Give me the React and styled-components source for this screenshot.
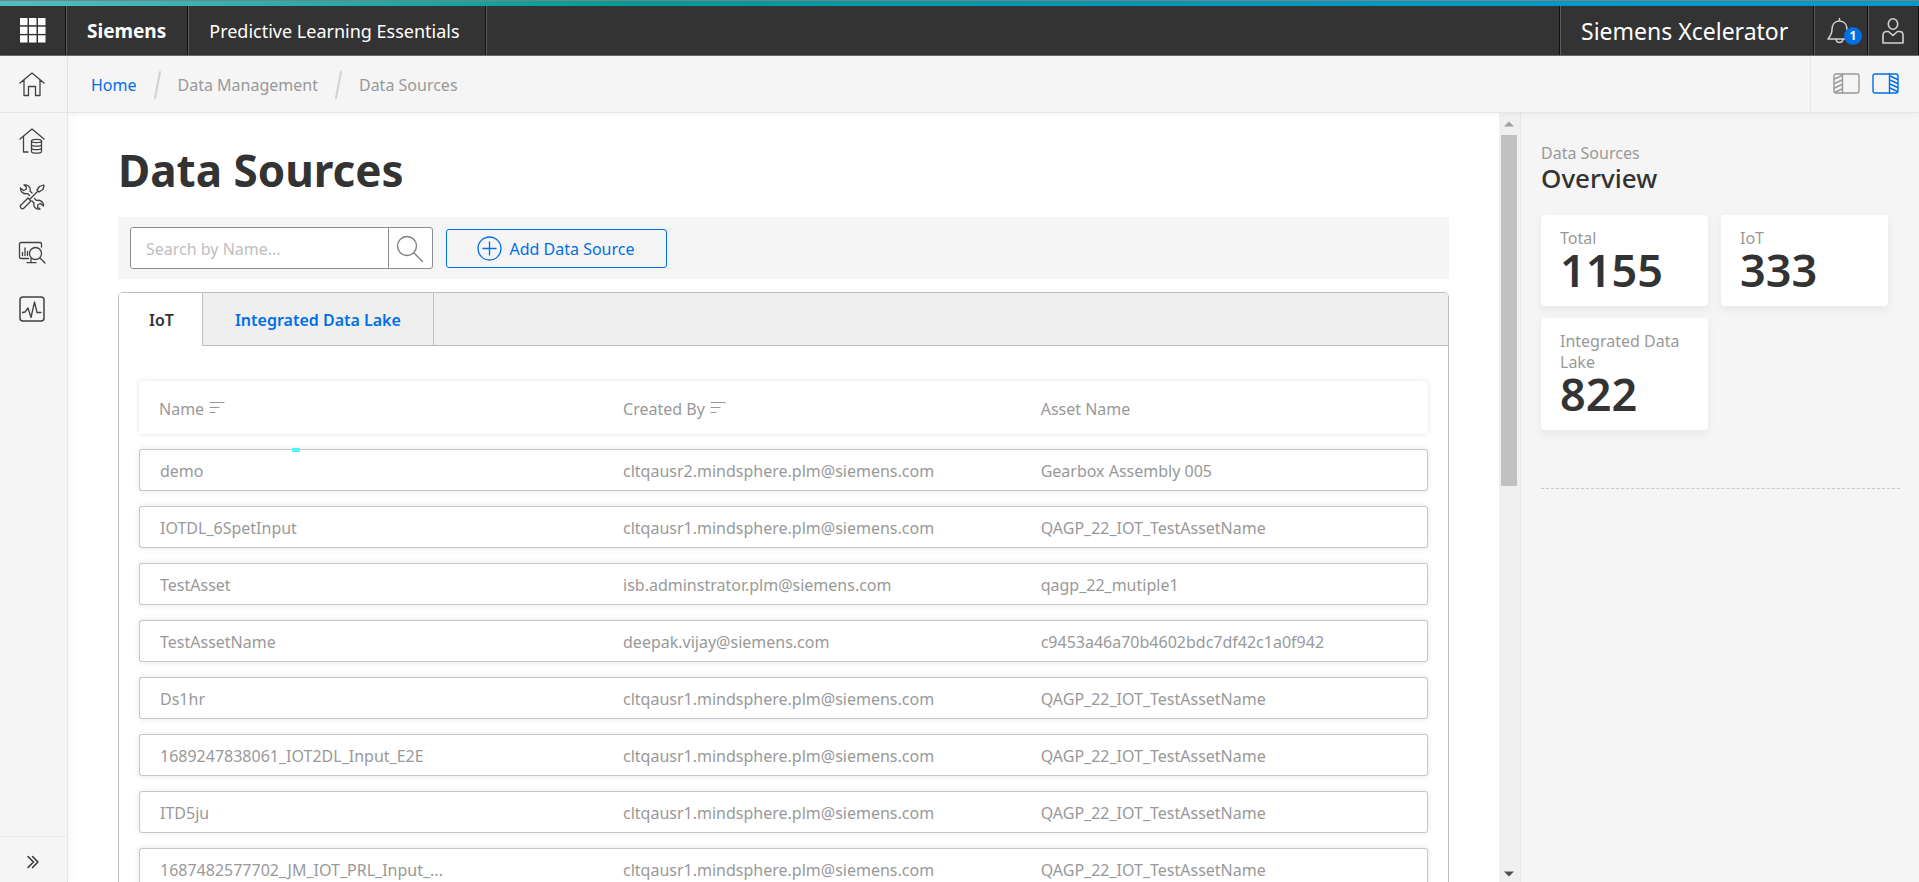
import { useState } from "react";
import styled, { createGlobalStyle } from "styled-components";

const colors = {
    dark: "#333333",
    text: "#333333",
    grey: "#999999",
    light: "#f5f5f5",
    border: "#e6e6e6",
    frame: "#bebebe",
    primary: "#006fe6",
    white: "#ffffff",
};

const GlobalStyle = createGlobalStyle`
    *, *::before, *::after {
        box-sizing: border-box;
    }
    body {
        margin: 0;
        background: ${colors.white};
        color: ${colors.text};
        font-family: "Noto Sans", "Open Sans", sans-serif;
        font-size: 16px;
        line-height: 22px;
    }
    button, input {
        font: inherit;
    }
`;

const Page = styled.div`
    display: flex;
    flex-direction: column;
    height: 100vh;
    overflow: hidden;
`;

/* Header */
const Stripe = styled.div`
    flex: none;
    height: 6px;
    border-top: 1px solid #7c8083;
    background: linear-gradient(90deg, #50bebe 0%, #009b96 33%, #0099aa 50%, #0099cb 85%);
`;

const TopBar = styled.header`
    display: flex;
    flex: none;
    height: 50px;
    border-bottom: 1px solid #6b6b6b;
    background: ${colors.dark};
    color: ${colors.white};
`;

const TopCell = styled.div`
    display: flex;
    align-items: center;
    min-width: ${({ $min }) => $min || 0}px;
    padding: 0 21px;
    border-right: 1px solid #111111;
    box-shadow: 1px 0 0 #5c5c5c;
    font-size: ${({ $size }) => $size || 18}px;
    font-weight: ${({ $bold }) => ($bold ? 700 : 400)};
    white-space: nowrap;
`;

const TopSpace = styled.div`
    flex: 1;
    border-right: 1px solid #111111;
    box-shadow: 1px 0 0 #5c5c5c;
`;

const TopButton = styled.button`
    position: relative;
    display: flex;
    align-items: center;
    justify-content: center;
    width: ${({ $width }) => $width}px;
    padding: 0;
    border: 0;
    border-right: 1px solid #111111;
    box-shadow: 1px 0 0 #5c5c5c;
    background: none;
    color: ${({ $bright }) => ($bright ? colors.white : "#d2d2d2")};
    cursor: pointer;
`;

const Badge = styled.span`
    position: absolute;
    right: 5px;
    top: 21px;
    width: 18px;
    height: 18px;
    border-radius: 50%;
    background: ${colors.primary};
    color: ${colors.white};
    font-size: 12px;
    font-weight: 700;
    line-height: 18px;
    text-align: center;
`;

/* Body and side navigation */
const Body = styled.div`
    display: flex;
    flex: 1;
    min-height: 0;
`;

const SideNav = styled.nav`
    display: flex;
    flex: none;
    flex-direction: column;
    width: 68px;
    border-right: 1px solid ${colors.border};
    background: ${colors.light};
    box-shadow: 0 0 10px rgba(0, 0, 0, 0.06);
    z-index: 1;
`;

const NavLink = styled.a`
    display: flex;
    align-items: center;
    justify-content: center;
    height: 56px;
    padding-right: 3px;
    color: #414141;
`;

const NavHome = styled(NavLink)`
    height: 57px;
    border-bottom: 1px solid ${colors.border};
`;

const NavToggle = styled.button`
    display: flex;
    align-items: center;
    justify-content: center;
    height: 46px;
    margin-top: auto;
    padding: 4px 2px 0 0;
    border: 0;
    border-top: 1px solid #ebebeb;
    background: none;
    color: ${colors.dark};
    cursor: pointer;
`;

const Content = styled.div`
    display: flex;
    flex: 1;
    flex-direction: column;
    min-width: 0;
`;

/* Breadcrumb */
const CrumbBar = styled.div`
    display: flex;
    flex: none;
    height: 57px;
    border-bottom: 1px solid ${colors.border};
    background: ${colors.light};
    box-shadow: 0 1px 5px rgba(0, 0, 0, 0.05);
    z-index: 1;
`;

const Crumbs = styled.nav`
    display: flex;
    flex: 1;
    align-items: center;
    gap: 17px;
    padding: 2px 23px 0;
    color: ${colors.grey};
`;

const CrumbLink = styled.a`
    color: ${({ $active }) => ($active ? colors.primary : colors.grey)};
    text-decoration: none;
`;

const ViewSwitch = styled.div`
    display: flex;
    align-items: center;
    gap: 12px;
    width: 109px;
    padding: 0 0 2px 22px;
    border-left: 1px solid ${colors.border};
`;

const ViewButton = styled.button`
    display: flex;
    padding: 0;
    border: 0;
    background: none;
    color: ${({ $active }) => ($active ? colors.primary : colors.grey)};
    cursor: pointer;
`;

const Columns = styled.div`
    display: flex;
    flex: 1;
    min-height: 0;
`;

const Main = styled.main`
    flex: 1;
    min-width: 0;
    padding: 25px 50px;
    overflow: hidden;
`;

const Title = styled.h1`
    margin: 0 0 15px;
    font-size: 44px;
    font-weight: 700;
    line-height: 64px;
`;

/* Search and actions */
const Toolbar = styled.div`
    display: flex;
    align-items: center;
    gap: 13px;
    height: 62px;
    margin-bottom: 13px;
    padding: 0 12px;
    background: ${colors.light};
`;

const SearchBox = styled.form`
    display: flex;
    width: 303px;
    height: 42px;
    border: 1px solid #8c8c8c;
    border-radius: 3px;
    background: ${colors.white};
`;

const SearchInput = styled.input`
    flex: 1;
    min-width: 0;
    padding: 2px 15px 0;
    border: 0;
    border-radius: 3px;
    outline: none;
    color: ${colors.text};
    &::placeholder {
        color: #bebebe;
    }
`;

const SearchButton = styled.button`
    display: flex;
    align-items: center;
    justify-content: center;
    width: 44px;
    padding: 2px 2px 0 0;
    border: 0;
    border-left: 1px solid #8c8c8c;
    background: none;
    color: #7d7d7d;
    cursor: pointer;
`;

const AddButton = styled.button`
    display: flex;
    align-items: center;
    justify-content: center;
    gap: 8px;
    width: 221px;
    height: 39px;
    padding: 0 2px 0 0;
    border: 1px solid ${colors.primary};
    border-radius: 3px;
    background: ${colors.light};
    color: ${colors.primary};
    cursor: pointer;
`;

const AddLabel = styled.span`
    padding-top: 2px;
`;

/* Tabs */
const TabFrame = styled.section`
    border: 1px solid ${colors.frame};
    border-radius: 5px;
`;

const TabList = styled.div`
    display: flex;
    height: 53px;
    border-radius: 4px 4px 0 0;
    background: #efefef;
    box-shadow: inset 0 -1px 0 ${colors.frame};
`;

const Tab = styled.button`
    padding: 0 ${({ $first }) => ($first ? "28px 0 30px" : "32px")};
    border: 0;
    border-right: 1px solid ${colors.frame};
    border-top-left-radius: ${({ $first }) => ($first ? 4 : 0)}px;
    background: ${({ $active }) => ($active ? colors.white : "none")};
    color: ${({ $active }) => ($active ? colors.text : colors.primary)};
    font-weight: 600;
    cursor: pointer;
`;

const TabPanel = styled.div`
    padding: 20px;
    min-height: 600px;
`;

const Table = styled.table`
    width: 100%;
    border-collapse: separate;
    border-spacing: 0 15px;
    table-layout: fixed;
    color: ${colors.grey};
    text-align: left;
`;

const HeadRow = styled.tr`
    height: 53px;
    border-radius: 4px;
    box-shadow: 0 0 5px rgba(0, 0, 0, 0.12);
`;

const HeadCell = styled.th`
    width: ${({ $width }) => $width};
    padding: 2px 20px 0;
    font-weight: 400;
`;

const SortButton = styled.button`
    display: flex;
    align-items: center;
    gap: 5px;
    padding: 0;
    border: 0;
    background: none;
    color: inherit;
    cursor: pointer;
    svg {
        margin-bottom: 4px;
    }
`;

const Row = styled.tr`
    height: 42px;
    border-radius: 3px;
    box-shadow: 0 0 6px rgba(0, 0, 0, 0.1);
`;

const Cell = styled.td`
    padding: 2px 20px 0;
    border: solid #c8c8c8;
    border-width: 1px 0;
    overflow: hidden;
    text-overflow: ellipsis;
    white-space: nowrap;
    &:first-child {
        border-left-width: 1px;
        border-radius: 3px 0 0 3px;
    }
    &:last-child {
        border-right-width: 1px;
        border-radius: 0 3px 3px 0;
    }
`;

const NameCell = styled(Cell)`
    position: relative;
    overflow: visible;
`;

const Marker = styled.span`
    position: absolute;
    top: -2px;
    left: 152px;
    width: 8px;
    height: 4px;
    background: #50f5f5;
`;

/* Scroll track */
const Track = styled.div`
    display: flex;
    flex: none;
    flex-direction: column;
    width: 22px;
    padding: 0 3px 0 2px;
    border-right: 1px solid ${colors.border};
    background: #f0f0f0;
`;

const TrackButton = styled.button`
    display: flex;
    align-items: center;
    justify-content: center;
    height: ${({ $dim }) => ($dim ? 22 : 16)}px;
    padding: 0;
    border: 0;
    background: none;
    color: ${({ $dim }) => ($dim ? "#a0a0a0" : "#505050")};
`;

const TrackBody = styled.div`
    flex: 1;
`;

const Thumb = styled.div`
    height: 48%;
    background: #c1c1c1;
`;

/* Overview panel */
const Panel = styled.aside`
    flex: none;
    width: 398px;
    padding: 29px 19px 0 20px;
    background: ${colors.light};
`;

const PanelLabel = styled.p`
    margin: 0;
    color: ${colors.grey};
`;

const PanelTitle = styled.h2`
    margin: 0 0 22px;
    font-size: 26px;
    font-weight: 500;
    line-height: 29px;
`;

const Cards = styled.div`
    display: grid;
    grid-template-columns: 167px 167px;
    gap: 12px 13px;
    align-items: start;
    padding-bottom: 58px;
    border-bottom: 1px dashed #c8c8c8;
`;

const Card = styled.div`
    padding: 13px 19px 15px;
    border-radius: 4px;
    background: ${colors.white};
    box-shadow: 0 4px 10px rgba(0, 0, 0, 0.06);
`;

const CardLabel = styled.p`
    margin: 0;
    color: ${colors.grey};
    line-height: 21px;
`;

const CardValue = styled.p`
    margin: 0;
    font-size: 45px;
    font-weight: 600;
    line-height: 42px;
`;

const rows = [
    ["demo", "cltqausr2.mindsphere.plm@siemens.com", "Gearbox Assembly 005"],
    ["IOTDL_6SpetInput", "cltqausr1.mindsphere.plm@siemens.com", "QAGP_22_IOT_TestAssetName"],
    ["TestAsset", "isb.adminstrator.plm@siemens.com", "qagp_22_mutiple1"],
    ["TestAssetName", "deepak.vijay@siemens.com", "c9453a46a70b4602bdc7df42c1a0f942"],
    ["Ds1hr", "cltqausr1.mindsphere.plm@siemens.com", "QAGP_22_IOT_TestAssetName"],
    ["1689247838061_IOT2DL_Input_E2E", "cltqausr1.mindsphere.plm@siemens.com", "QAGP_22_IOT_TestAssetName"],
    ["ITD5ju", "cltqausr1.mindsphere.plm@siemens.com", "QAGP_22_IOT_TestAssetName"],
    ["1687482577702_JM_IOT_PRL_Input_...", "cltqausr1.mindsphere.plm@siemens.com", "QAGP_22_IOT_TestAssetName"],
];

const stats = [
    { label: "Total", value: 1155 },
    { label: "IoT", value: 333 },
    { label: "Integrated Data Lake", value: 822 },
];

//Base icon with thin strokes
function Icon({ w = 26, h = 26, children, ...props }) {
    return (
        <svg width={w} height={h} viewBox={`0 0 ${w} ${h}`} fill="none" stroke="currentColor" strokeWidth="1.3" strokeLinecap="round" strokeLinejoin="round" aria-hidden="true" {...props}>
            {children}
        </svg>
    );
}

function GridIcon() {
    return (
        <Icon w={26} h={25} fill="currentColor" stroke="none">
            {[0, 9, 18].map((x) => [0, 8.7, 17.3].map((y) => <rect key={`${x}-${y}`} x={x} y={y} width="7.5" height="7.2" />))}
        </Icon>
    );
}

function SortIcon() {
    return (
        <Icon w={16} h={14}>
            <path d="M0.5 2.5h15M0.5 7.5h10M0.5 12.5h6" strokeLinecap="butt" strokeWidth="1" />
        </Icon>
    );
}

function Slash() {
    return (
        <Icon w={7} h={28} stroke="#d2d2d2" strokeWidth="2">
            <path d="M6 1L1 27" />
        </Icon>
    );
}

function App() {
    const [tab, setTab] = useState("iot");
    const [search, setSearch] = useState("");

    return (
        <>
            <GlobalStyle />
            <Page>
                <Stripe />
                <TopBar>
                    <TopButton $width={66} $bright aria-label="Applications">
                        <GridIcon />
                    </TopButton>
                    <TopCell $size={19} $min={121} $bold>Siemens</TopCell>
                    <TopCell $size={18} $min={298}>Predictive Learning Essentials</TopCell>
                    <TopSpace />
                    <TopCell $size={23} $min={254}>Siemens Xcelerator</TopCell>
                    <TopButton $width={54} aria-label="Notifications">
                        <Icon w={28} h={28} strokeWidth="1.5">
                            <path d="M12.5 4V1.5M12.5 4c-4.8 0-7.500 3.500-7.500 8.500 0 4-1.500 6.500-4 9.500h23c-2.500-3-4-5.500-4-9.500 0-5-2.700-8.500-7.500-8.500zM9 22.500c.3 2 1.700 3 3.500 3s3.200-1 3.500-3" />
                        </Icon>
                        <Badge>1</Badge>
                    </TopButton>
                    <TopButton $width={51} aria-label="Account">
                        <Icon w={22} h={26} strokeWidth="1.6">
                            <ellipse cx="11" cy="6" rx="4.700" ry="5.200" />
                            <path d="M6.500 13.500H4.500C2.500 13.500 1 15 1 17v8h20v-8c0-2-1.500-3.500-3.500-3.500h-2L11 17.500z" />
                        </Icon>
                    </TopButton>
                </TopBar>
                <Body>
                    <SideNav aria-label="Main">
                        <NavHome href="#home" aria-label="Home">
                            <Icon>
                                <path d="M1 12L13 2l12 10M5 9v15.500h4.500v-9h7v9H21V9" />
                            </Icon>
                        </NavHome>
                        <NavLink href="#data" aria-label="Data Management">
                            <Icon>
                                <path d="M1 11L13 1l12 10M4.500 8.500v15.500H9" />
                                <ellipse cx="17.500" cy="13" rx="5" ry="1.600" />
                                <path d="M12.500 13v10.500c0 2.200 10 2.200 10 0V13M12.500 16.500c0 2.200 10 2.200 10 0M12.500 20c0 2.200 10 2.200 10 0" />
                            </Icon>
                        </NavLink>
                        <NavLink href="#tools" aria-label="Tools">
                            <Icon>
                                <path d="M2 21l7-7 3 3-7 7c-1 1-2 1-3 0s-1-2 0-3z" />
                                <path d="M10.500 15.500l8.500-8.500M18 6l2.500-3.500 4-1.500.5.5-1 4L20 8z" />
                                <path d="M10.500 11.500l-2-2C5 10.500 1 8 1.500 4l3 2.500L7 5.500 7.500 3 5 1c4-.8 7 2 6 6l2 2" />
                                <path d="M15.500 14.500l2 2c3.500-1 7.500 1.500 7 5.500l-3-2.500-2.500 1-.5 2.500 2.500 2c-4 .8-7-2-6-6l-2-2" />
                            </Icon>
                        </NavLink>
                        <NavLink href="#analytics" aria-label="Analytics">
                            <Icon w={28} h={26}>
                                <path d="M10.500 18.500H3c-.8 0-1.500-.7-1.500-1.500V4c0-.8.7-1.500 1.500-1.500h19c.8 0 1.500.7 1.500 1.500v3M13 18.500v4M9 22.700h9M4.500 12.500v3M7 8v7.500M9.500 11.500v4" />
                                <circle cx="17.500" cy="13.500" r="6" />
                                <path d="M22 18l5 5" />
                            </Icon>
                        </NavLink>
                        <NavLink href="#monitor" aria-label="Monitoring">
                            <Icon>
                                <rect x="1" y="1" width="24" height="24" rx="3" strokeWidth="1.5" />
                                <path d="M3.500 16.500l2.500-.5 3-4 3 9.500L15.500 6 18 16.500h4" />
                            </Icon>
                        </NavLink>
                        <NavToggle aria-label="Expand navigation">
                            <Icon w={14} h={14} strokeWidth="1.5">
                                <path d="M2 1.500L7.500 7 2 12.500M6.500 1.500L12 7 6.500 12.500" />
                            </Icon>
                        </NavToggle>
                    </SideNav>
                    <Content>
                        <CrumbBar>
                            <Crumbs aria-label="Breadcrumb">
                                <CrumbLink href="#home" $active>Home</CrumbLink>
                                <Slash />
                                <CrumbLink href="#data">Data Management</CrumbLink>
                                <Slash />
                                <span>Data Sources</span>
                            </Crumbs>
                            <ViewSwitch>
                                <ViewButton aria-label="Left panel">
                                    <Icon w={27} h={21} strokeWidth="1.4">
                                        <rect x="1" y="1" width="25" height="19" rx="2" />
                                        <path d="M9.500 1v19M1.500 6L9 2.500M1.500 10.500L9 7M1.500 15L9 11.500M1.500 19.500L9 16" />
                                    </Icon>
                                </ViewButton>
                                <ViewButton $active aria-label="Right panel">
                                    <Icon w={27} h={21} strokeWidth="1.4">
                                        <rect x="1" y="1" width="25" height="19" rx="2" />
                                        <path d="M17.500 1v19M18 3l7.500 3.500M18 7l7.500 3.500M18 11l7.500 3.500M18 15l7.500 3.500" />
                                    </Icon>
                                </ViewButton>
                            </ViewSwitch>
                        </CrumbBar>
                        <Columns>
                            <Main>
                                <Title>Data Sources</Title>
                                <Toolbar>
                                    <SearchBox onSubmit={(e) => e.preventDefault()}>
                                        <SearchInput aria-label="Search by Name" placeholder="Search by Name..." value={search} onChange={(e) => setSearch(e.target.value)} />
                                        <SearchButton aria-label="Search">
                                            <Icon w={28} h={28}>
                                                <circle cx="11" cy="11" r="9.500" />
                                                <path d="M18 18l8.500 8.500" />
                                            </Icon>
                                        </SearchButton>
                                    </SearchBox>
                                    <AddButton>
                                        <Icon w={25} h={25}>
                                            <circle cx="12.500" cy="12.500" r="11.500" />
                                            <path d="M12.500 6v13M6 12.500h13" />
                                        </Icon>
                                        <AddLabel>Add Data Source</AddLabel>
                                    </AddButton>
                                </Toolbar>
                                <TabFrame>
                                    <TabList role="tablist">
                                        <Tab role="tab" $first $active={tab === "iot"} aria-selected={tab === "iot"} onClick={() => setTab("iot")}>IoT</Tab>
                                        <Tab role="tab" $active={tab === "lake"} aria-selected={tab === "lake"} onClick={() => setTab("lake")}>Integrated Data Lake</Tab>
                                    </TabList>
                                    <TabPanel role="tabpanel">
                                        <Table>
                                            <thead>
                                                <HeadRow>
                                                    <HeadCell $width="36%"><SortButton>Name <SortIcon /></SortButton></HeadCell>
                                                    <HeadCell $width="32.4%"><SortButton>Created By <SortIcon /></SortButton></HeadCell>
                                                    <HeadCell>Asset Name</HeadCell>
                                                </HeadRow>
                                            </thead>
                                            <tbody>
                                                {rows.map(([name, createdBy, asset], i) => (
                                                    <Row key={name}>
                                                        <NameCell>
                                                            {name}
                                                            {i === 0 && <Marker />}
                                                        </NameCell>
                                                        <Cell>{createdBy}</Cell>
                                                        <Cell>{asset}</Cell>
                                                    </Row>
                                                ))}
                                            </tbody>
                                        </Table>
                                    </TabPanel>
                                </TabFrame>
                            </Main>
                            <Track>
                                <TrackButton $dim aria-label="Scroll up">
                                    <Icon w={10} h={6} fill="currentColor" stroke="none"><path d="M0 5.500h10L5 .5z" /></Icon>
                                </TrackButton>
                                <TrackBody><Thumb /></TrackBody>
                                <TrackButton aria-label="Scroll down">
                                    <Icon w={10} h={6} fill="currentColor" stroke="none"><path d="M0 .5h10L5 5.500z" /></Icon>
                                </TrackButton>
                            </Track>
                            <Panel>
                                <PanelLabel>Data Sources</PanelLabel>
                                <PanelTitle>Overview</PanelTitle>
                                <Cards>
                                    {stats.map((stat) => (
                                        <Card key={stat.label}>
                                            <CardLabel>{stat.label}</CardLabel>
                                            <CardValue>{stat.value}</CardValue>
                                        </Card>
                                    ))}
                                </Cards>
                            </Panel>
                        </Columns>
                    </Content>
                </Body>
            </Page>
        </>
    );
}

export default App;
